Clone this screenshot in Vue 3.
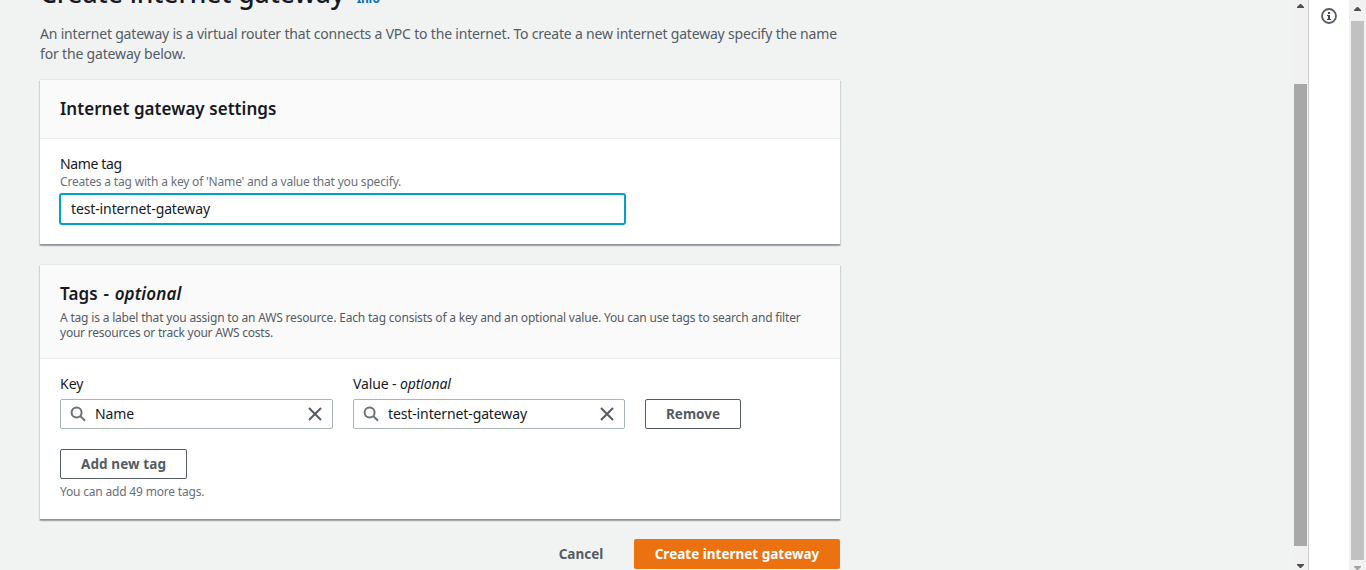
<script setup>
import { ref } from 'vue'

const nameTag = ref('test-internet-gateway')
const tags = ref([
  { id: 'key', label: 'Key', optional: false, value: 'Name' },
  { id: 'value', label: 'Value', optional: true, value: 'test-internet-gateway' },
])
</script>

<template>
  <div class="page">
    <main class="content">
      <div class="column">
        <div class="title">
          <h1>Create internet gateway</h1>
          <a class="info">Info</a>
        </div>
        <p class="intro">
          <span class="l1">An internet gateway is a virtual router that connects a VPC to the internet. To create a new internet gateway specify the name</span><br />
          <span class="l2">for the gateway below.</span>
        </p>

        <section class="card settings">
          <header><h2 class="h-settings">Internet gateway settings</h2></header>
          <div class="body">
            <div class="label"><span class="t-nametag">Name tag</span></div>
            <div class="hint"><span class="t-hint">Creates a tag with a key of 'Name' and a value that you specify.</span></div>
            <div class="field focused"><span class="value">{{ nameTag }}</span></div>
          </div>
        </section>

        <section class="card tags">
          <header>
            <h2 class="h-tags">Tags - <em>optional</em></h2>
            <p class="about">
              <span class="a1">A tag is a label that you assign to an AWS resource. Each tag consists of a key and an optional value. You can use tags to search and filter</span><br />
              <span class="a2">your resources or track your AWS costs.</span>
            </p>
          </header>
          <div class="body">
            <div class="row">
              <div v-for="t in tags" :key="t.id" class="cell" :class="t.id">
                <div class="label"><span>{{ t.label }}<template v-if="t.optional"> - <em>optional</em></template></span></div>
                <div class="field">
                  <svg class="search" viewBox="0 0 16 16" width="16" height="16">
                    <circle cx="6.6" cy="6.4" r="5" />
                    <path d="M10.3 10.1L15 14.8" />
                  </svg>
                  <span class="value">{{ t.value }}</span>
                  <svg class="clear" viewBox="0 0 14 14" width="14" height="14">
                    <path d="M1 1L13 13M13 1L1 13" />
                  </svg>
                </div>
              </div>
              <button class="btn remove"><span>Remove</span></button>
            </div>
            <button class="btn add"><span>Add new tag</span></button>
            <div class="more"><span>You can add 49 more tags.</span></div>
          </div>
        </section>

        <div class="actions">
          <button class="link"><span>Cancel</span></button>
          <button class="primary"><span>Create internet gateway</span></button>
        </div>
      </div>
    </main>

    <div class="bar inner">
      <i class="arrow up"></i>
      <div class="thumb"></div>
      <i class="arrow down"></i>
    </div>
    <aside class="panel">
      <svg viewBox="0 0 16 16" width="16" height="16">
        <circle cx="8" cy="8" r="7" fill="none" stroke="#545b64" stroke-width="1.8" />
        <path d="M7 4h2v2H7zM6 7h3v4h1v1H6v-1h1V8H6z" fill="#414750" />
      </svg>
    </aside>
    <div class="bar outer">
      <i class="arrow up"></i>
      <div class="thumb"></div>
      <i class="arrow down"></i>
    </div>
  </div>
</template>

<style>
html,
body {
  overflow: hidden;
  background: #f2f3f3;
}
</style>

<style scoped>
.page {
  display: flex;
  width: 1366px;
  height: 570px;
  overflow: hidden;
  background: #f1f3f3;
  color: #16191f;
  font-family: 'Noto Sans', 'Open Sans', sans-serif;
  font-size: 14px;
  line-height: 20px;
}
.content {
  flex: 1;
  overflow: hidden;
}
.column {
  width: 800px;
  margin: -23px 0 0 40px;
}
.page span,
h1,
h2,
.info {
  white-space: nowrap;
}
h1,
h2,
p {
  margin: 0;
}
.title {
  display: flex;
  align-items: baseline;
  gap: 12px;
  height: 47px;
}
h1 {
  font-size: 26.5px;
  line-height: 32px;
  font-weight: 500;
  letter-spacing: -0.07px;
}
.info {
  color: #0073bb;
  font-size: 12px;
  font-weight: 700;
  letter-spacing: -0.4px;
}
.intro {
  height: 40px;
  margin-bottom: 16px;
  color: #545b64;
}
.l1 {
  letter-spacing: -0.19px;
}
.l2 {
  letter-spacing: -0.17px;
}
.card {
  background: #fff;
  box-shadow: 0 1px 1px 0 rgba(0, 28, 36, 0.12), 1px 1px 1px 0 rgba(0, 28, 36, 0.12), -1px 1px 1px 0 rgba(0, 28, 36, 0.12), 0 -1px 0 0 #e7eaea;
  border-bottom: 1px solid #89949c;
  box-sizing: border-box;
}
.card header {
  box-sizing: border-box;
  padding: 18px 20px 0;
  background: #fafafa;
  border-bottom: 1px solid #eaeded;
}
.settings {
  height: 165px;
  margin-bottom: 20px;
}
.settings header {
  height: 59px;
}
.tags {
  height: 255px;
}
.tags header {
  height: 94px;
}
h2 {
  font-size: 17px;
  line-height: 22px;
  font-weight: 600;
}
.h-settings {
  letter-spacing: 0.05px;
}
.h-tags {
  letter-spacing: 0.15px;
  word-spacing: 1px;
}
.about {
  margin-top: 5px;
  color: #545b64;
  font-size: 12px;
  line-height: 15px;
}
.a1 {
  letter-spacing: -0.185px;
}
.a2 {
  letter-spacing: -0.24px;
}
.body {
  padding: 15px 20px 0;
}
.label {
  height: 20px;
}
.t-nametag {
  letter-spacing: -0.35px;
}
.hint {
  height: 15px;
  color: #687078;
  font-size: 12px;
  line-height: 15px;
}
.t-hint {
  letter-spacing: -0.18px;
}
.value {
  letter-spacing: -0.12px;
}
.field {
  display: flex;
  align-items: center;
  box-sizing: border-box;
  height: 30px;
  padding: 0 10px 0 9px;
  border: 1px solid #aab7b8;
  border-radius: 2px;
  background: #fff;
}
.focused {
  width: 567px;
  height: 32px;
  margin: 4px 0 0 -1px;
  padding-left: 10px;
  border: 2px solid #00a1c9;
  border-radius: 3px;
}
.row {
  display: grid;
  grid-template-columns: 273px 272px 96px;
  gap: 20px;
  align-items: end;
}
.row .field {
  margin-top: 5px;
}
.search {
  flex: none;
  margin-right: 9px;
  fill: none;
  stroke: #687078;
  stroke-width: 2;
}
.clear {
  margin-left: auto;
  fill: none;
  stroke: #545b64;
  stroke-width: 2;
}
button {
  display: flex;
  align-items: center;
  justify-content: center;
  box-sizing: border-box;
  height: 30px;
  padding: 0;
  border: 1px solid #545b64;
  border-radius: 2px;
  background: #fff;
  color: #545b64;
  font: 700 13.5px/20px 'Noto Sans', 'Open Sans', sans-serif;
}
.add {
  width: 127px;
  margin-top: 20px;
  letter-spacing: 0.1px;
}
.more {
  margin-top: 5px;
  color: #687078;
  font-size: 12px;
  line-height: 15px;
  letter-spacing: -0.19px;
}
.actions {
  display: flex;
  justify-content: flex-end;
  gap: 10px;
  margin-top: 19px;
}
.link {
  width: 86px;
  border: 0;
  background: none;
}
.primary {
  width: 206px;
  border: 0;
  background: #ec7211;
  color: #fff;
}
.bar {
  display: flex;
  flex-direction: column;
  align-items: center;
  box-sizing: border-box;
  height: 570px;
  background: #f1f1f1;
}
.arrow {
  flex: none;
  width: 7px;
  height: 4px;
  background: #505050;
}
.up {
  clip-path: polygon(3px 0, 4px 0, 7px 3px, 7px 4px, 0 4px, 0 3px);
}
.down {
  clip-path: polygon(0 0, 7px 0, 7px 1px, 4px 4px, 3px 4px, 0 1px);
}
.inner {
  width: 16px;
  padding: 4px 1px 0 2px;
}
.inner .thumb {
  width: 13px;
  height: 462px;
  margin: 76px 0 18px;
  background: #a8a8a8;
}
.panel {
  box-sizing: border-box;
  width: 41px;
  padding: 8px 0 0 12px;
  border-left: 1px solid #c9cfcf;
  background: #fff;
}
.panel svg {
  display: block;
}
.outer {
  width: 17px;
  padding-top: 7px;
}
.outer .thumb {
  width: 13px;
  height: 541px;
  margin: 10px 0 6px;
  background: #c1c1c1;
}
.outer .down {
  background: #a3a3a3;
}
</style>
